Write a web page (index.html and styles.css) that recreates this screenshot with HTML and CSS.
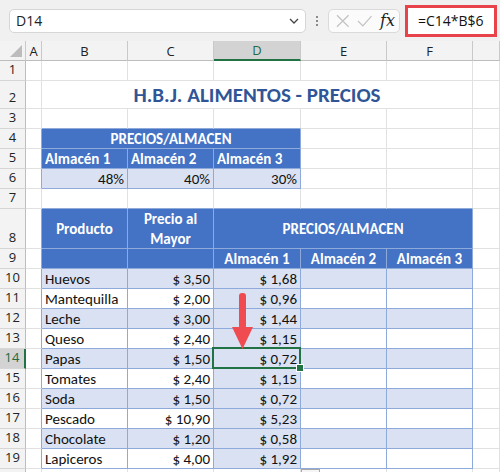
FILE: index.html
```html
<!DOCTYPE html>
<html lang="es">
<head>
    <meta charset="UTF-8"><title>H.B.J. Alimentos - Precios</title>
    <link rel="stylesheet" href="styles.css">
</head>
<body>
<div class="topBar">
    <div class="nameBox">
        <span>D14</span>
        <svg class="chevron" width="10" height="6" viewBox="0 0 10 6"><path d="M1 1 L5 5 L9 1" fill="none" stroke="#444" stroke-width="1.3"/></svg>
    </div>
    <div class="dots"><i></i><i></i><i></i></div>
    <div class="fxBox">
        <svg width="14" height="14" viewBox="0 0 14 14"><path d="M1 1 L13 13 M13 1 L1 13" stroke="#c3c3c3" stroke-width="1.3"/></svg>
        <svg width="16" height="12" viewBox="0 0 16 12"><path d="M1 6 L6 11 L15 1" fill="none" stroke="#c3c3c3" stroke-width="1.3"/></svg>
        <span class="fx">fx</span>
    </div>
    <div class="formula">=C14*B$6</div>
</div>

<div class="sheet">
    <div class="row colHeads">
        <div class="c corner"><span class="tri"></span></div>
        <div class="c ch">A</div><div class="c ch">B</div><div class="c ch">C</div>
        <div class="c ch sel">D</div><div class="c ch">E</div><div class="c ch">F</div><div class="c ch"></div>
    </div>
    <div class="row">
        <div class="c rh">1</div><div class="c"></div><div class="c"></div><div class="c"></div>
        <div class="c"></div><div class="c"></div><div class="c"></div><div class="c"></div>
    </div>
    <div class="row r2">
        <div class="c rh">2</div><div class="c"></div>
        <div class="c title span5">H.B.J. ALIMENTOS - PRECIOS</div><div class="c"></div>
    </div>
    <div class="row">
        <div class="c rh">3</div><div class="c"></div><div class="c top"></div><div class="c top"></div>
        <div class="c top"></div><div class="c"></div><div class="c"></div><div class="c"></div>
    </div>
    <div class="row">
        <div class="c rh">4</div><div class="c edge"></div>
        <div class="c hd ctr span3">PRECIOS/ALMACEN</div>
        <div class="c"></div><div class="c"></div><div class="c"></div>
    </div>
    <div class="row">
        <div class="c rh">5</div><div class="c edge"></div>
        <div class="c hd">Almacén 1</div><div class="c hd">Almacén 2</div><div class="c hd">Almacén 3</div>
        <div class="c"></div><div class="c"></div><div class="c"></div>
    </div>
    <div class="row">
        <div class="c rh">6</div><div class="c edge"></div>
        <div class="c band num">48%</div><div class="c band num">40%</div><div class="c band num">30%</div>
        <div class="c"></div><div class="c"></div><div class="c"></div>
    </div>
    <div class="row">
        <div class="c rh">7</div><div class="c"></div><div class="c top"></div><div class="c top"></div>
        <div class="c top"></div><div class="c top"></div><div class="c top"></div><div class="c"></div>
    </div>
    <div class="row r8">
        <div class="c rh">8</div><div class="c edge"></div>
        <div class="c hd ctr">Producto</div>
        <div class="c hd ctr wrap">Precio al<br>Mayor</div>
        <div class="c hd ctr span3">PRECIOS/ALMACEN</div>
        <div class="c"></div>
    </div>
    <div class="row">
        <div class="c rh">9</div><div class="c edge"></div>
        <div class="c hd"></div><div class="c hd"></div>
        <div class="c hd ctr">Almacén 1</div><div class="c hd ctr">Almacén 2</div><div class="c hd ctr">Almacén 3</div>
        <div class="c"></div>
    </div>
    <div class="row">
        <div class="c rh">10</div><div class="c edge"></div>
        <div class="c band">Huevos</div><div class="c band num">$ 3,50</div><div class="c band num">$ 1,68</div>
        <div class="c band"></div><div class="c band"></div><div class="c"></div>
    </div>
    <div class="row">
        <div class="c rh">11</div><div class="c edge"></div>
        <div class="c plain">Mantequilla</div><div class="c plain num">$ 2,00</div><div class="c band num">$ 0,96</div>
        <div class="c plain"></div><div class="c plain"></div><div class="c"></div>
    </div>
    <div class="row">
        <div class="c rh">12</div><div class="c edge"></div>
        <div class="c band">Leche</div><div class="c band num">$ 3,00</div><div class="c band num">$ 1,44</div>
        <div class="c band"></div><div class="c band"></div><div class="c"></div>
    </div>
    <div class="row">
        <div class="c rh">13</div><div class="c edge"></div>
        <div class="c plain">Queso</div><div class="c plain num">$ 2,40</div><div class="c band num">$ 1,15</div>
        <div class="c plain"></div><div class="c plain"></div><div class="c"></div>
    </div>
    <div class="row">
        <div class="c rh rowSel">14</div><div class="c edge"></div>
        <div class="c band">Papas</div><div class="c band num">$ 1,50</div><div class="c band num active">$ 0,72<span class="handle"></span></div>
        <div class="c band"></div><div class="c band"></div><div class="c"></div>
    </div>
    <div class="row">
        <div class="c rh">15</div><div class="c edge"></div>
        <div class="c plain">Tomates</div><div class="c plain num">$ 2,40</div><div class="c band num">$ 1,15</div>
        <div class="c plain"></div><div class="c plain"></div><div class="c"></div>
    </div>
    <div class="row">
        <div class="c rh">16</div><div class="c edge"></div>
        <div class="c band">Soda</div><div class="c band num">$ 1,50</div><div class="c band num">$ 0,72</div>
        <div class="c band"></div><div class="c band"></div><div class="c"></div>
    </div>
    <div class="row">
        <div class="c rh">17</div><div class="c edge"></div>
        <div class="c plain">Pescado</div><div class="c plain num">$ 10,90</div><div class="c band num">$ 5,23</div>
        <div class="c plain"></div><div class="c plain"></div><div class="c"></div>
    </div>
    <div class="row">
        <div class="c rh">18</div><div class="c edge"></div>
        <div class="c band">Chocolate</div><div class="c band num">$ 1,20</div><div class="c band num">$ 0,58</div>
        <div class="c band"></div><div class="c band"></div><div class="c"></div>
    </div>
    <div class="row">
        <div class="c rh">19</div><div class="c edge"></div>
        <div class="c plain">Lapiceros</div><div class="c plain num">$ 4,00</div><div class="c band num">$ 1,92</div>
        <div class="c plain"></div><div class="c plain"></div><div class="c"></div>
    </div>
    <div class="row">
        <div class="c rh"></div><div class="c"></div><div class="c"></div><div class="c"></div>
        <div class="c"></div><div class="c"></div><div class="c"></div><div class="c"></div>
    </div>

    <svg class="arrow" width="24" height="58" viewBox="0 0 24 58">
        <rect x="7" y="0" width="7" height="36" rx="3" fill="#ef4b50"/>
        <polygon points="0,34 21,34 10.5,56" fill="#ef4b50"/>
    </svg>
    <span class="pasteOpt"></span>
</div>
</body>
</html>
```

FILE: styles.css
```css
html {
    font-family: "Open Sans", "Noto Sans", sans-serif;
}
body {
    margin: 0;
    width: 500px;
    height: 472px;
    overflow: hidden;
    background-color: #ffffff;
}

/* formula bar */
.topBar {
    height: 41px;
    background-color: #f0f0f0;
    display: flex;
    align-items: center;
    padding-left: 9px;
    box-sizing: border-box;
}
.nameBox {
    width: 297px;
    height: 24px;
    box-sizing: border-box;
    background-color: #ffffff;
    border: 1px solid #d6d6d6;
    border-radius: 5px;
    display: flex;
    align-items: center;
    justify-content: space-between;
    padding: 0 6px 0 6px;
    font-size: 14px;
    color: #222;
}
.dots {
    width: 22px;
    display: flex;
    flex-direction: column;
    align-items: center;
    row-gap: 2px;
}
.dots i {
    width: 2px;
    height: 2px;
    background-color: #8a8a8a;
}
.fxBox {
    width: 72px;
    height: 24px;
    box-sizing: border-box;
    background-color: #fbfbfb;
    border: 1px solid #dadada;
    border-radius: 5px;
    display: flex;
    align-items: center;
    padding: 0 4px 0 7px;
    column-gap: 7px;
}
.fx {
    font-family: "DejaVu Serif", "Liberation Serif", serif;
    font-style: italic;
    font-size: 16px;
    color: #222;
    margin-left: 1px;
}
.formula {
    margin-left: 5px;
    width: 92px;
    height: 32px;
    box-sizing: border-box;
    border: 3px solid #e8434b;
    background-color: #ffffff;
    font-size: 14px;
    color: #111;
    display: flex;
    align-items: center;
    padding-left: 10px;
}

/* grid */
.sheet {
    position: relative;
}
.row {
    display: grid;
    grid-template-columns: 26px 16px 86px 86px 87px 86px 86px 1fr;
    height: 20px;
}
.r2 {
    height: 28px;
}
.r8 {
    height: 40px;
}
.c {
    box-sizing: border-box;
    border-right: 1px solid #e1e1e1;
    border-bottom: 1px solid #e1e1e1;
    display: flex;
    align-items: center;
    padding: 0 3px;
    white-space: nowrap;
    overflow: hidden;
    font-family: "Carlito", "Lato", sans-serif;
    font-size: 15px;
    color: #111;
}
.span3 {
    grid-column: span 3;
}
.span5 {
    grid-column: span 5;
}
.colHeads .c {
    background-color: #f3f3f3;
    border-right-color: #c9c9c9;
    border-bottom-color: #bdbdbd;
    justify-content: center;
    font-family: "Open Sans", sans-serif;
    font-size: 13px;
    color: #222;
}
.colHeads .sel {
    background-color: #d3d3d3;
    color: #1e6b43;
    border-bottom: 2px solid #217346;
}
.corner {
    position: relative;
}
.tri {
    position: absolute;
    right: 3px;
    bottom: 3px;
    width: 0;
    height: 0;
    border-left: 12px solid transparent;
    border-bottom: 12px solid #bcbcbc;
}
.rh {
    background-color: #f3f3f3;
    border-right-color: #bdbdbd;
    border-bottom-color: #d6d6d6;
    justify-content: center;
    align-items: flex-end;
    padding-bottom: 2px;
    font-family: "Open Sans", sans-serif;
    font-size: 13px;
    color: #222;
}
.rowSel {
    background-color: #d3d3d3;
    color: #1e6b43;
    border-right: 2px solid #217346;
}
.title {
    justify-content: center;
    font-weight: bold;
    font-size: 21px;
    color: #2f5597;
    padding-top: 1px;
}
.top {
    border-bottom-color: #8eaadb;
}
.edge {
    border-right-color: #8eaadb;
}
.hd, .band, .plain {
    border-color: #8eaadb;
}
.hd {
    background-color: #4472c4;
    color: #ffffff;
    font-weight: bold;
}
.band {
    background-color: #d9e1f2;
}
.plain {
    background-color: #ffffff;
}
.ctr {
    justify-content: center;
    text-align: center;
}
.wrap {
    white-space: normal;
    line-height: 20px;
}
.num {
    justify-content: flex-end;
}

/* active cell D14 */
.active {
    overflow: visible;
    position: relative;
}
.active::before {
    content: "";
    position: absolute;
    left: -2px;
    top: -2px;
    right: -1px;
    bottom: -1px;
    border: 2px solid #217346;
}
.handle {
    position: absolute;
    right: -4px;
    bottom: -4px;
    width: 6px;
    height: 6px;
    background-color: #217346;
    border: 1px solid #ffffff;
    z-index: 2;
}
.arrow {
    position: absolute;
    left: 232px;
    top: 252px;
}
.pasteOpt {
    position: absolute;
    left: 301px;
    top: 428px;
    width: 19px;
    height: 10px;
    box-sizing: border-box;
    border: 1px solid #a9a9a9;
    background-color: #f5f5f5;
}
```
